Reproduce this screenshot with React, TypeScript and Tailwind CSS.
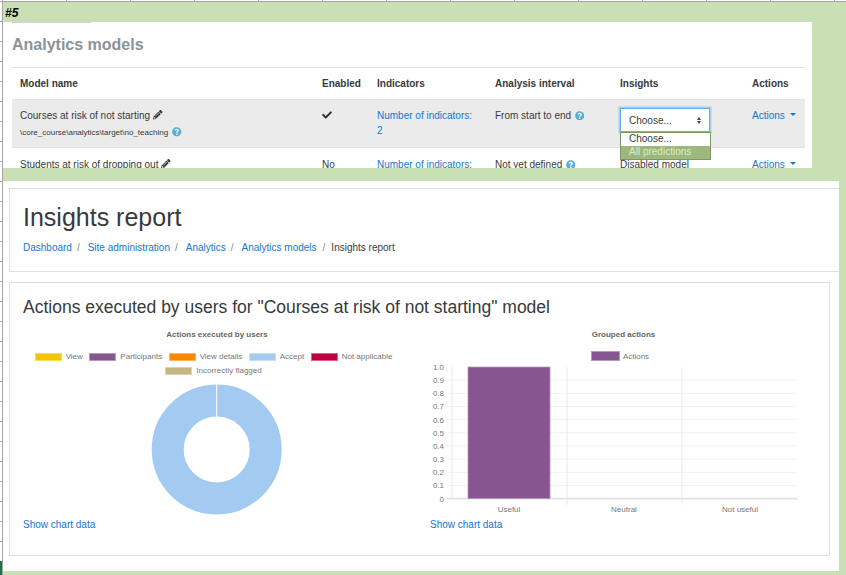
import { FaCheck, FaPencilAlt, FaQuestionCircle } from "react-icons/fa";

const link = "text-[#1177d1]";

function Help({ className = "" }: { className?: string }) {
  return <FaQuestionCircle className={`inline-block text-[9.5px] text-[#5aaed6] ${className}`} />;
}

function Pencil() {
  return <FaPencilAlt className="ml-[3px] inline-block align-[-0.5px] text-[9.5px] text-[#3b3b3b]" />;
}

function ActionsMenu() {
  return (
    <a className={`flex items-center gap-[5px] self-start ${link}`}>
      Actions
      <span className="mb-[2px] h-0 w-0 border-x-[3.5px] border-t-[3.5px] border-x-transparent border-t-[#1177d1]" />
    </a>
  );
}

function ModelsTable() {
  return (
    <div className="relative mr-[7px] border-t border-[#dfe2e5] text-[10px] leading-[15px] text-[#373a3c]">
      <div className="grid h-[31px] grid-cols-[302px_55px_118px_125px_132px_1fr] items-center pl-2 font-bold">
        <span>Model name</span>
        <span>Enabled</span>
        <span>Indicators</span>
        <span>Analysis interval</span>
        <span>Insights</span>
        <span>Actions</span>
      </div>
      <div className="grid h-[49px] grid-cols-[302px_55px_118px_125px_132px_1fr] border-y border-[#dfe2e5] bg-[#ebebeb] pt-2 pl-2">
        <div>
          <div>
            Courses at risk of not starting
            <Pencil />
          </div>
          <div className="mt-[2px] text-[8px]">
            \core_course\analytics\target\no_teaching <Help className="ml-[2px] align-[-1.5px]" />
          </div>
        </div>
        <FaCheck className="mt-[2px] text-[10px] text-[#2f3133]" />
        <a className={link}>
          Number of indicators:
          <br />2
        </a>
        <div>
          From start to end <Help className="ml-[1px] align-[-1px]" />
        </div>
        <div className="flex h-[24px] w-[90px] items-center justify-between self-start border border-[#66afe9] bg-white pr-[8px] pl-[8px] shadow-[0_0_0_1.5px_#a8cfe9]">
          <span>Choose...</span>
          <span className="flex flex-col gap-[1px]">
            <span className="h-0 w-0 border-x-[2.5px] border-b-[3px] border-x-transparent border-b-[#444]" />
            <span className="h-0 w-0 border-x-[2.5px] border-t-[3px] border-x-transparent border-t-[#444]" />
          </span>
        </div>
        <ActionsMenu />
      </div>
      <div className="grid h-[40px] grid-cols-[302px_55px_118px_125px_132px_1fr] pt-[9px] pl-2">
        <div>
          Students at risk of dropping out
          <Pencil />
        </div>
        <span>No</span>
        <a className={link}>Number of indicators:</a>
        <div>
          Not yet defined <Help className="ml-[1px] align-[-1px]" />
        </div>
        <span>Disabled model</span>
        <ActionsMenu />
      </div>
      {/* open native select list, sits over the rows */}
      <div className="absolute top-[64px] left-[608px] w-[91px] border border-[#7f9567] bg-white leading-[11px]">
        <div className="h-[13px] pl-2">Choose...</div>
        <div className="h-[13px] bg-[#9db87c] pl-2 text-[#dcebc8]">All predictions</div>
      </div>
    </div>
  );
}

const legend = [
  ["View", "bg-[#f6c300]"],
  ["Participants", "bg-[#875590]"],
  ["View details", "bg-[#f98500]"],
  ["Accept", "bg-[#a3cbf1]"],
  ["Not applicable", "bg-[#c0003c]"],
  ["Incorrectly flagged", "bg-[#c5b583]"],
];

function Swatch({ color }: { color: string }) {
  return <span className={`h-[8px] w-[27px] border border-white/40 ${color}`} />;
}

function ChartTitle({ children }: { children: string }) {
  return <div className="text-center text-[8px] leading-[10px] font-bold text-[#666]">{children}</div>;
}

function DonutChart() {
  return (
    <div className="w-[388px]">
      <ChartTitle>Actions executed by users</ChartTitle>
      <div className="mt-[12px] flex h-[29px] flex-wrap content-start justify-center gap-x-[6.5px] gap-y-[5px] pr-[7px] text-[8px] leading-[9px] text-[#777]">
        {legend.map(([name, color]) => (
          <span key={name} className="flex items-center gap-[4px]">
            <Swatch color={color} />
            {name}
          </span>
        ))}
      </div>
      <svg width="388" height="138" viewBox="0 0 388 138" className="mt-[-4px] block">
        <circle cx="193.7" cy="72.5" r="49" fill="none" stroke="#a3cbf1" strokeWidth="32" />
        <line x1="193.7" y1="7" x2="193.7" y2="40" stroke="#fff" strokeWidth="1" />
      </svg>
    </div>
  );
}

const ticks = ["1.0", "0.9", "0.8", "0.7", "0.6", "0.5", "0.4", "0.3", "0.2", "0.1", "0"];

function BarChart() {
  const top = 6;
  const step = 13.16;
  return (
    <div className="w-[380px]">
      <div className="pl-[7px]">
        <ChartTitle>Grouped actions</ChartTitle>
      </div>
      <div className="mt-[11px] flex items-center justify-center gap-[3px] text-[8px] leading-[9px] text-[#777]">
        <span className="h-[10px] w-[29px] border border-white/40 bg-[#875590]" />
        Actions
      </div>
      <svg width="380" height="152" viewBox="0 0 380 152" className="block text-[8px]">
        {ticks.map((t, i) => {
          const y = top + i * step;
          return (
            <g key={t}>
              {i > 0 && i < 10 && <line x1="17" x2="367" y1={y} y2={y} stroke="#f1f1f1" />}
              <text x="14" y={y + 3} textAnchor="end" fill="#777" fontFamily="Liberation Sans">
                {t}
              </text>
            </g>
          );
        })}
        {[22, 137, 252].map((x) => (
          <line key={x} x1={x} x2={x} y1={top} y2={x === 22 ? top + 131.6 : top + 138} stroke="#e9e9e9" />
        ))}
        <line x1="17" x2="367" y1={top + 131.6} y2={top + 131.6} stroke="#e3e3e3" strokeWidth="1.6" />
        <rect x="38" y={top} width="82" height="131.6" fill="#875590" stroke="#b595b9" strokeWidth="0.8" />
        {[
          ["Useful", 79],
          ["Neutral", 194],
          ["Not useful", 310],
        ].map(([label, x]) => (
          <text key={label} x={x} y="151" textAnchor="middle" fill="#777" fontFamily="Liberation Sans">
            {label}
          </text>
        ))}
      </svg>
    </div>
  );
}

export default function App() {
  return (
    <div className="flex h-[575px] w-[846px] flex-col overflow-hidden bg-[#c8e0b3] font-['Liberation_Sans',sans-serif]">
      {/* spreadsheet column ruler behind the pasted shots */}
      <div className="h-[2px] shrink-0 border-b border-[#a5a5a5] bg-[repeating-linear-gradient(90deg,#fff_0,#fff_2px,#a5a5a5_2px,#a5a5a5_3px,#fff_3px,#fff_64px)]" />
      <div className="flex min-h-0 flex-1">
        {/* row ruler */}
        <div className="flex w-[3px] shrink-0 flex-col border-r border-[#a5a5a5] bg-[repeating-linear-gradient(180deg,#fff_0,#fff_19px,#a5a5a5_19px,#a5a5a5_20px)]">
          <div className="mt-auto h-[14px] w-[2px] bg-[#1e7145]" />
        </div>
        <div className="min-w-0 flex-1">
          <div className="h-[20px] pt-[4px] pl-[2px] text-[12px] leading-[14px] font-bold text-black italic">#5</div>

          <section className="h-[146px] w-[809px] overflow-hidden bg-white pl-[9px]">
            <div className="h-px w-[79px] bg-[#cfd4d8]" />
            <h2 className="h-[44px] pt-[13px] text-[16px] leading-[18px] font-bold text-[#8b929a]">Analytics models</h2>
            <ModelsTable />
          </section>

          <section className="mt-[13px] h-[390px] w-[836px] bg-white pt-[7px] pl-[6px]">
            <div className="h-[84px] border-y border-l border-[#dfdfdf] pt-[11px] pl-[13px]">
              <h1 className="text-[25px] leading-[34px] text-[#373a3c]">Insights report</h1>
              <nav className="mt-[6px] flex text-[10px] leading-[15px] text-[#373a3c]">
                <a className={link}>Dashboard</a>
                <span className="mr-[8px] ml-[5px] text-[#818a91]">/</span>
                <a className={link}>Site administration</a>
                <span className="mr-[8px] ml-[5px] text-[#818a91]">/</span>
                <a className={link}>Analytics</a>
                <span className="mr-[8px] ml-[5px] text-[#818a91]">/</span>
                <a className={link}>Analytics models</a>
                <span className="mr-[6px] ml-[6px] text-[#818a91]">/</span>
                <span>Insights report</span>
              </nav>
            </div>

            <div className="mt-[10px] h-[274px] w-[821px] border border-[#dfdfdf] pt-[13px] pl-[13px]">
              <h3 className="text-[17.5px] leading-[22px] text-[#373a3c]">
                Actions executed by users for "Courses at risk of not starting" model
              </h3>
              <div className="mt-[12px] flex gap-[19px]">
                <DonutChart />
                <BarChart />
              </div>
              <div className="mt-[2px] flex gap-[19px] text-[10px] leading-[15px]">
                <a className={`w-[388px] ${link}`}>Show chart data</a>
                <a className={link}>Show chart data</a>
              </div>
            </div>
          </section>
        </div>
      </div>
    </div>
  );
}
